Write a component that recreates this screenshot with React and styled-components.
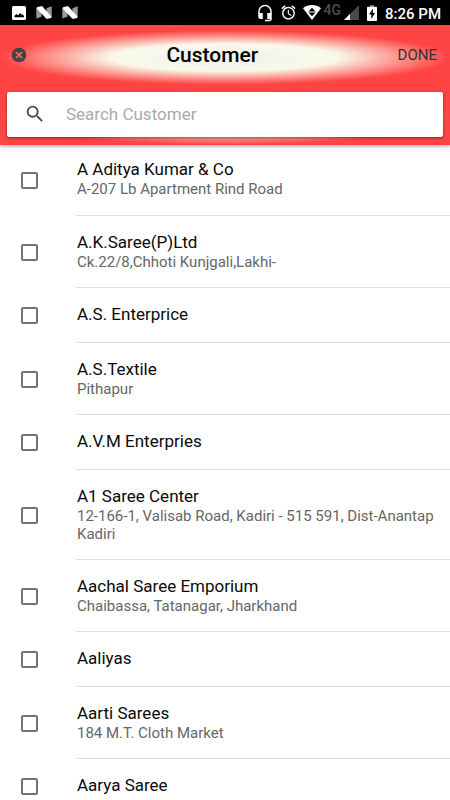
import React from "react";
import styled, { createGlobalStyle } from "styled-components";
import { MdAlarm, MdHeadsetMic, MdSearch } from "react-icons/md";

const GlobalStyle = createGlobalStyle`
  * {
    box-sizing: border-box;
  }
  body {
    margin: 0;
    background: #ffffff;
    color: #0a0a0a;
    font-family: Roboto, sans-serif;
  }
`;

const Screen = styled.div`
  height: 100vh;
  display: flex;
  flex-direction: column;
  overflow: hidden;
`;

const StatusBar = styled.div`
  flex: none;
  height: 25px;
  padding: 0 9px 0 12px;
  display: flex;
  align-items: center;
  justify-content: space-between;
  background: #000000;
  color: #ffffff;
`;

const StatusGroup = styled.div`
  display: flex;
  align-items: center;
  gap: ${(props) => props.$gap}px;

  svg {
    display: block;
    flex: none;
  }
`;

const Network = styled.span`
  padding-bottom: 6px;
  font-size: 14px;
  line-height: 16px;
  font-weight: 500;
  color: #4d4d4d;
`;

const Clock = styled.time`
  font-size: 15px;
  line-height: 24px;
  font-weight: 500;
  padding-top: 2px;
`;

const Header = styled.header`
  position: relative;
  flex: none;
  background: #ff4444;
  box-shadow: 0 1px 4px rgba(0, 0, 0, 0.4);
`;

const GlowBand = styled.div`
  background: radial-gradient(
    50% 27px at center,
    #f1f1ee,
    #f9f9ea 50%,
    #ff4444
  );
`;

const TitleBar = styled(GlowBand)`
  height: 65px;
  padding: 0 13px 5px 11px;
  display: grid;
  grid-template-columns: auto 1fr auto;
  align-items: center;
`;

const IconButton = styled.button`
  padding: 0;
  border: 0;
  background: none;
  cursor: pointer;

  svg {
    display: block;
  }
`;

const Title = styled.h1`
  margin: 0;
  text-align: center;
  font-size: 21px;
  line-height: 24px;
  font-weight: 500;
  color: #000000;
`;

const DoneButton = styled.button`
  padding: 0;
  border: 0;
  background: none;
  font: 400 15px/20px Roboto, sans-serif;
  color: #333333;
  cursor: pointer;
`;

const SearchBand = styled(GlowBand)`
  padding: 2px 7px 8px;
`;

const SearchBox = styled.label`
  height: 45px;
  padding: 0 17px 1px;
  display: flex;
  align-items: center;
  gap: 20px;
  border-radius: 2px;
  background: #ffffff;
  box-shadow: 0 1px 3px rgba(0, 0, 0, 0.5);
  color: #4d4d4d;

  svg {
    flex: none;
  }
`;

const SearchInput = styled.input`
  flex: 1;
  min-width: 0;
  padding: 0;
  border: 0;
  outline: 0;
  background: none;
  font: 400 17px/24px Roboto, sans-serif;
  color: #0a0a0a;

  &::placeholder {
    color: #aaaaaa;
    opacity: 1;
  }
`;

const List = styled.ul`
  flex: 1;
  min-height: 0;
  margin: 0;
  padding: 0;
  list-style: none;
  overflow: hidden;
`;

const Row = styled.label`
  display: flex;
  align-items: center;
  cursor: pointer;
`;

const Checkbox = styled.input`
  appearance: none;
  flex: none;
  width: 17px;
  height: 17px;
  margin: 0 38px 0 21px;
  border: 2px solid #737373;
  border-radius: 2px;
  background: #ffffff;

  &:checked {
    background: #ff4444;
    border-color: #ff4444;
  }
`;

const Details = styled.div`
  flex: 1;
  min-width: 0;
  min-height: 55px;
  padding: 16px 16px 16px 1px;
  border-bottom: 1px solid #dedede;

  li:first-child & {
    padding-top: 14px;
    padding-bottom: 17px;
  }
`;

const Name = styled.div`
  font-size: 17px;
  line-height: 21px;
`;

const Address = styled.div`
  font-size: 15px;
  line-height: 18px;
  color: #666666;
`;

const customers = [
  { name: "A Aditya Kumar & Co", address: "A-207 Lb Apartment Rind Road" },
  { name: "A.K.Saree(P)Ltd", address: "Ck.22/8,Chhoti Kunjgali,Lakhi-" },
  { name: "A.S. Enterprice" },
  { name: "A.S.Textile", address: "Pithapur" },
  { name: "A.V.M Enterpries" },
  {
    name: "A1 Saree Center",
    address: "12-166-1, Valisab Road, Kadiri - 515 591, Dist-Anantap Kadiri",
  },
  { name: "Aachal Saree Emporium", address: "Chaibassa, Tatanagar, Jharkhand" },
  { name: "Aaliyas" },
  { name: "Aarti Sarees", address: "184 M.T. Cloth Market" },
  { name: "Aarya Saree" },
];

const PictureIcon = () => (
  <svg width="14" height="14" viewBox="0 0 14 14" aria-hidden="true">
    <rect width="14" height="14" rx="1.5" fill="#fff" />
    <path d="M2.5 11.2V9.8l2-1.8 1.5 1.2L8.3 7l1.2 1.8 1-.6 1.4 1.6v1.4z" fill="#000" />
  </svg>
);

const NougatIcon = () => (
  <svg width="16" height="13" viewBox="0 0 16 13" aria-hidden="true">
    <path d="M.3 1.5 5.5 4v6.8L.3 12.6zM10.5 2.2 15.7.3v10.9L10.5 9z" fill="#9a9a9a" />
    <path d="M1 1.2 4.8.3h1.5l9 10.2v1.6l-3.8.7h-1.2L1 2.8z" fill="#fff" />
  </svg>
);

const WifiIcon = () => (
  <svg width="18" height="15" viewBox="0 0 18 15" aria-hidden="true">
    <path d="M0 3.2C5-1 13-1 18 3.2L9 15z" fill="#fff" />
    <path d="M9 2.7 12.5 6.5h-7zM5.500 7.6h7L9 11.3z" fill="#000" />
  </svg>
);

const SignalIcon = () => (
  <svg width="15" height="15" viewBox="0 0 15 15" aria-hidden="true">
    <path d="M15 0v15H0z" fill="#4a4a4a" />
    <path d="M6 9v6H0z" fill="#fff" />
  </svg>
);

const BatteryIcon = () => (
  <svg width="10" height="16" viewBox="0 0 10 16" aria-hidden="true">
    <path d="M3 0h4v2H3z" fill="#777" />
    <path d="M0 2.5Q0 1.700.8 1.700h8.400q.8 0 .8.800v12.700q0 .8-.8.800H.8q-.8 0-.8-.8z" fill="#fff" />
    <path d="M6 3.5 2 9.5h2.3V14L8 8H5.8z" fill="#000" />
  </svg>
);

const CloseIcon = () => (
  <svg width="16" height="16" viewBox="0 0 16 16" aria-hidden="true">
    <circle cx="8" cy="8" r="7.3" fill="#444" />
    <path d="m5 5 6 6M11 5l-6 6" stroke="#ff6b66" strokeWidth="1.6" />
  </svg>
);

export default function App() {
  return (
    <Screen>
      <GlobalStyle />
      <StatusBar>
        <StatusGroup $gap={10}>
          <PictureIcon />
          <NougatIcon />
          <NougatIcon />
        </StatusGroup>
        <StatusGroup $gap={8}>
          <StatusGroup $gap={6}>
            <MdHeadsetMic size={18} />
            <MdAlarm size={17} />
            <StatusGroup $gap={3}>
              <WifiIcon />
              <Network>4G</Network>
              <SignalIcon />
            </StatusGroup>
          </StatusGroup>
          <BatteryIcon />
          <Clock>8:26 PM</Clock>
        </StatusGroup>
      </StatusBar>
      <Header>
        <TitleBar>
          <IconButton type="button" aria-label="Close">
            <CloseIcon />
          </IconButton>
          <Title>Customer</Title>
          <DoneButton type="button">DONE</DoneButton>
        </TitleBar>
        <SearchBand>
          <SearchBox>
            <MdSearch size={22} />
            <SearchInput
              type="search"
              aria-label="Search Customer"
              placeholder="Search Customer"
            />
          </SearchBox>
        </SearchBand>
      </Header>
      <List>
        {customers.map((customer) => (
          <li key={customer.name}>
            <Row>
              <Checkbox type="checkbox" />
              <Details>
                <Name>{customer.name}</Name>
                {customer.address && <Address>{customer.address}</Address>}
              </Details>
            </Row>
          </li>
        ))}
      </List>
    </Screen>
  );
}
